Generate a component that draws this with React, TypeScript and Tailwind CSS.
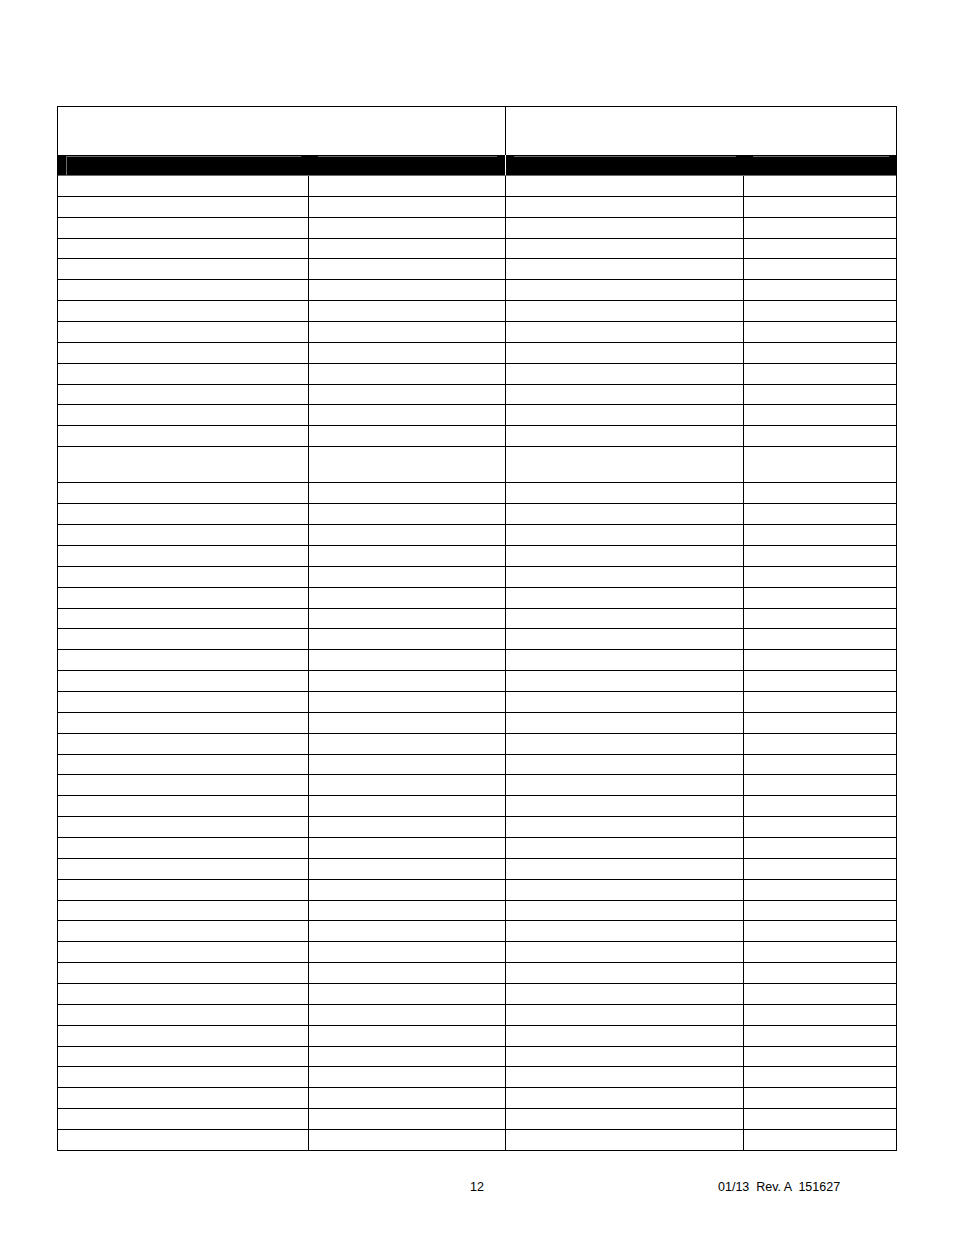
import React from "react";

const rowHeights: string[] = [
  ...Array(13).fill("h-[20.87px]"),
  "h-[36.2px]",
  ...Array(32).fill("h-[20.87px]"),
];

function Row({ h }: { h: string }) {
  return (
    <div className={`flex ${h} border-b border-black box-border`}>
      <div className="w-[251px] border-r border-black" />
      <div className="w-[197px] border-r border-black" />
      <div className="w-[238px] border-r border-black" />
      <div className="w-[152px]" />
    </div>
  );
}

export default function App() {
  return (
    <div className="w-[954px] min-h-[1235px] bg-white pt-[106px] pl-[57px] font-['Liberation_Sans',Arial,sans-serif] text-black">
      <div className="w-[840px] border-l border-r border-t border-black box-border">
        <div className="flex h-[48px]">
          <div className="w-[448px] border-r border-black" />
          <div className="flex-1" />
        </div>
        <div className="relative h-[21px] bg-black">
          <div className="absolute left-[8px] top-[1px] h-[19px] w-px bg-[#6b6b6b]" />
          <div className="absolute left-[8px] top-[1px] h-px w-[235px] bg-[#6b6b6b]" />
          <div className="absolute left-[260px] top-[1px] h-px w-[179px] bg-[#6b6b6b]" />
          <div className="absolute left-[447px] top-0 h-[21px] w-px bg-white" />
          <div className="absolute left-[456px] top-[1px] h-px w-[222px] bg-[#6b6b6b]" />
          <div className="absolute left-[695px] top-[1px] h-px w-[136px] bg-[#6b6b6b]" />
          <div className="absolute left-0 bottom-0 h-px w-full bg-[#6b6b6b]" />
        </div>
        {rowHeights.map((h, i) => (
          <Row key={i} h={h} />
        ))}
      </div>
      <div className="mt-[30px] flex text-[12.5px] leading-[12px] whitespace-pre">
        <span className="ml-[413px] w-[248px]">12</span>
        <span>{"01/13  Rev. A  151627"}</span>
      </div>
    </div>
  );
}
